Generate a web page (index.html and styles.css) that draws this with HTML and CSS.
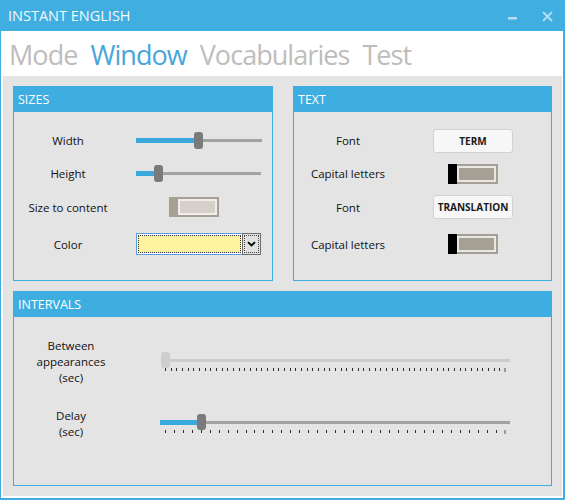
FILE: index.html
```html
<!DOCTYPE html>
<html>
<head>
<meta charset="utf-8">
<link rel="stylesheet" href="styles.css">
</head>
<body>
<div class="window">
  <div class="titlebar">
    <span class="title">INSTANT ENGLISH</span>
    <div class="winbtns">
      <svg class="btn-min" width="9" height="3" viewBox="0 0 9 3"><rect x="0" y="0" width="9" height="2.5" fill="#b3def3"/></svg>
      <svg class="btn-close" width="11" height="11" viewBox="0 0 11 11"><path d="M1 1L10 10M10 1L1 10" stroke="#b3def3" stroke-width="1.8" fill="none"/></svg>
    </div>
  </div>
  <div class="frame">
    <nav class="tabs">
      <span class="tab">Mode</span>
      <span class="tab active">Window</span>
      <span class="tab">Vocabularies</span>
      <span class="tab">Test</span>
    </nav>
    <div class="content">
      <section class="panel">
        <div class="panel-header">SIZES</div>
        <div class="form">
          <div class="label">Width</div>
          <div class="slider sz-slider" style="width:126px">
            <div class="fill" style="width:58px"></div><div class="thumb"></div><div class="rest"></div>
          </div>
          <div class="label">Height</div>
          <div class="slider sz-slider" style="width:125px">
            <div class="fill" style="width:18px"></div><div class="thumb"></div><div class="rest"></div>
          </div>
          <div class="label">Size to content</div>
          <div class="toggle toggle-off sz-toggle"><div class="knob"></div><div class="track"></div></div>
          <div class="label">Color</div>
          <div class="combo">
            <div class="combo-field"><div class="swatch"></div></div>
            <div class="combo-btn"><div class="combo-btn-inner">
              <svg width="9" height="6" viewBox="0 0 9 6"><path d="M1 1.2L4.5 4.5L8 1.2" stroke="#000" stroke-width="1.8" fill="none"/></svg>
            </div></div>
          </div>
        </div>
      </section>
      <section class="panel">
        <div class="panel-header">TEXT</div>
        <div class="form">
          <div class="label">Font</div>
          <div class="btn">TERM</div>
          <div class="label">Capital letters</div>
          <div class="toggle toggle-on tx-toggle"><div class="knob"></div><div class="track"></div></div>
          <div class="label">Font</div>
          <div class="btn">TRANSLATION</div>
          <div class="label">Capital letters</div>
          <div class="toggle toggle-on tx-toggle"><div class="knob"></div><div class="track"></div></div>
        </div>
      </section>
      <section class="panel intervals">
        <div class="panel-header">INTERVALS</div>
        <div class="iform">
          <div class="label ilabel">Between<br>appearances<br>(sec)</div>
          <div class="sgroup">
            <div class="slider islider disabled">
              <div class="fill" style="width:1px"></div><div class="thumb"></div><div class="rest"></div>
            </div>
            <svg class="ticks" width="342" height="4" viewBox="0 0 342 4" shape-rendering="crispEdges">
              <path d="M0.5 0v3M6.5 0v3M11.5 0v3M17.5 0v3M23.5 0v3M28.5 0v3M34.5 0v3M40.5 0v3M45.5 0v3M51.5 0v3M57.5 0v3M62.5 0v3M68.5 0v3M74.5 0v3M79.5 0v3M85.5 0v3M91.5 0v3M96.5 0v3M102.5 0v3M108.5 0v3M113.5 0v3M119.5 0v3M125.5 0v3M130.5 0v3M136.5 0v3M142.5 0v3M147.5 0v3M153.5 0v3M159.5 0v3M164.5 0v3M170.5 0v3M176.5 0v3M181.5 0v3M187.5 0v3M193.5 0v3M198.5 0v3M204.5 0v3M210.5 0v3M215.5 0v3M221.5 0v3M227.5 0v3M232.5 0v3M238.5 0v3M244.5 0v3M249.5 0v3M255.5 0v3M261.5 0v3M266.5 0v3M272.5 0v3M278.5 0v3M283.5 0v3M289.5 0v3M295.5 0v3M300.5 0v3M306.5 0v3M312.5 0v3M317.5 0v3M323.5 0v3M329.5 0v3M334.5 0v3" stroke="#2b2b2b" stroke-width="1" fill="none"/>
              <rect x="339" y="0" width="2" height="4" fill="#9a9a9a"/>
            </svg>
          </div>
          <div class="label ilabel">Delay<br>(sec)</div>
          <div class="sgroup">
            <div class="slider islider">
              <div class="fill" style="width:37px"></div><div class="thumb"></div><div class="rest"></div>
            </div>
            <svg class="ticks" width="342" height="4" viewBox="0 0 342 4" shape-rendering="crispEdges">
              <path d="M0.5 0v3M9.5 0v3M18.5 0v3M27.5 0v3M36.5 0v3M45.5 0v3M54.5 0v3M63.5 0v3M72.5 0v3M81.5 0v3M89.5 0v3M98.5 0v3M107.5 0v3M116.5 0v3M125.5 0v3M134.5 0v3M143.5 0v3M152.5 0v3M161.5 0v3M170.5 0v3M179.5 0v3M188.5 0v3M197.5 0v3M206.5 0v3M215.5 0v3M224.5 0v3M233.5 0v3M242.5 0v3M250.5 0v3M259.5 0v3M268.5 0v3M277.5 0v3M286.5 0v3M295.5 0v3M304.5 0v3M313.5 0v3M322.5 0v3M331.5 0v3" stroke="#2b2b2b" stroke-width="1" fill="none"/>
              <rect x="339" y="0" width="2" height="4" fill="#9a9a9a"/>
            </svg>
          </div>
        </div>
      </section>
    </div>
  </div>
</div>
</body>
</html>
```

FILE: styles.css
```css
* { box-sizing: border-box; }
html, body { margin: 0; padding: 0; }
body {
  width: 565px;
  height: 500px;
  overflow: hidden;
  background: #fff;
  font-family: "Open Sans", "Noto Sans", sans-serif;
}
.window {
  width: 565px;
  height: 500px;
  display: flex;
  flex-direction: column;
  background: #40aee0;
}
.titlebar {
  height: 31px;
  flex: none;
  display: flex;
  align-items: flex-start;
  padding-left: 8px;
  color: #f3f9fd;
}
.title {
  font-size: 14.5px;
  line-height: 19px;
  margin-top: 6px;
}
.winbtns {
  margin-left: auto;
  display: flex;
  align-items: flex-start;
  padding-right: 12px;
}
.btn-min { display: block; margin-top: 17px; margin-right: 25px; }
.btn-close { display: block; margin-top: 11px; }

.frame {
  flex: 1;
  display: flex;
  flex-direction: column;
  background: #fff;
  margin: 0 2px 2px 1px;
  padding: 0 1px 2px 2px;
}
.tabs {
  height: 45px;
  flex: none;
  display: flex;
  gap: 13px;
  padding-left: 6px;
  padding-top: 6px;
  font-size: 27px;
  line-height: 36px;
  letter-spacing: -0.95px;
}
.tab { color: #bfbcbc; }
.tab.active { color: #48a5dc; }

.content {
  flex: 1;
  background: #e4e4e4;
  padding: 10px;
  display: grid;
  grid-template-columns: 260px 259px;
  grid-template-rows: 195px 195px;
  gap: 10px 20px;
}
.panel {
  border: 1px solid #3eade0;
  display: flex;
  flex-direction: column;
}
.intervals { grid-column: 1 / -1; }
.panel-header {
  height: 25px;
  flex: none;
  background: #3eade0;
  color: #fff;
  font-size: 12.5px;
  padding-left: 4px;
  display: flex;
  align-items: center;
}

.form {
  display: grid;
  grid-template-columns: 108px 1fr;
  grid-template-rows: 33px 33px 34px 40px;
  padding-top: 12px;
  align-items: center;
}
.label {
  text-align: center;
  font-size: 11.5px;
  color: #111;
}

.slider {
  display: flex;
  align-items: center;
  height: 17px;
}
.slider .fill { height: 5px; background: #3aa9dc; flex: none; }
.slider .thumb {
  width: 9px;
  height: 17px;
  border-radius: 3px;
  background: #7a7a7a;
  flex: none;
}
.slider .rest { flex: 1; height: 3px; background: #a2a2a2; }
.sz-slider { margin-left: 14px; }

.toggle {
  width: 50px;
  height: 20px;
  display: flex;
  background: #a69f94;
  padding: 2px 2px 2px 0;
}
.toggle .knob { width: 9px; margin: -2px 0; flex: none; }
.toggle .track { flex: 1; border: 2px solid #efeeeb; }
.toggle-off .knob { background: #a69f94; }
.toggle-off .track { background: #d5d1ca; }
.toggle-on .knob { background: #000; }
.toggle-on .track { background: #a69f94; border-color: #e9e7e3; }
.sz-toggle { margin-left: 47px; }
.tx-toggle { margin-left: 46px; }

.combo {
  display: flex;
  width: 125px;
  height: 22px;
  margin-left: 14px;
}
.combo-field {
  flex: 1;
  border: 1px solid #5a9fe0;
  border-right: none;
  background: #fff;
  padding: 1px;
}
.swatch {
  height: 100%;
  background: #fff2a0;
  border: 1px dotted #333;
}
.combo-btn {
  width: 19px;
  flex: none;
  border: 1px solid #6e6e6e;
  background: #e1e1e1;
  padding: 1px;
}
.combo-btn-inner {
  height: 100%;
  border: 1px dotted #444;
  display: flex;
  align-items: center;
  justify-content: center;
}
.combo-btn-inner svg { display: block; }

.btn {
  width: 80px;
  height: 24px;
  margin-left: 31px;
  background: #f7f7f7;
  border: 1px solid #d2d2d2;
  border-radius: 3px;
  font-size: 10px;
  font-weight: 700;
  color: #1a1a1a;
  display: flex;
  align-items: center;
  justify-content: center;
}

.iform {
  display: grid;
  grid-template-columns: 114px 1fr;
  grid-template-rows: 60px 64px;
  padding-top: 15px;
  align-items: center;
}
.ilabel { line-height: 16px; }
.sgroup {
  display: flex;
  flex-direction: column;
  width: 350px;
  margin-left: 32px;
}
.islider { height: 16px; }
.islider .thumb { height: 16px; }
.slider.disabled .thumb { background: #cecece; }
.slider.disabled .rest { background: #cbcbcb; }
.slider.disabled .fill { background: transparent; }
.ticks { display: block; margin-left: 5px; }
```
